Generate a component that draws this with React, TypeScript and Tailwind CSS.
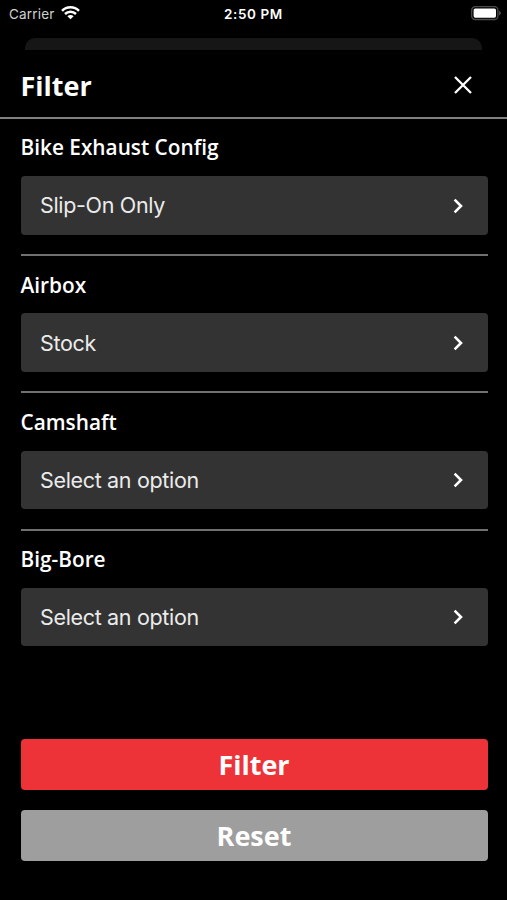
import React, { useState } from 'react'

interface FilterOption {
  label: string
  value: string | null
}

const initialOptions: FilterOption[] = [
  { label: 'Bike Exhaust Config', value: 'Slip-On Only' },
  { label: 'Airbox', value: 'Stock' },
  { label: 'Camshaft', value: null },
  { label: 'Big-Bore', value: null },
]

function StatusBar() {
  return (
    <div className="grid h-[38px] grid-cols-3 items-start px-[6.5px] pt-1 font-['Inter',sans-serif] text-[13.5px] leading-5">
      <div className="flex items-center gap-[6px] pl-[2.5px] text-[#d0d0d0]">
        <span className="tracking-[0.2px]">Carrier</span>
        <svg width="19" height="15" viewBox="0 0 19 15" fill="none" stroke="#fff" strokeWidth="2.5" className="-mt-[3px]">
          <path d="M1 5.8a12.1 12.1 0 0 1 17 0" />
          <path d="M4 9a7.8 7.8 0 0 1 11 0" />
          <path d="M9.5 14.3 6.4 11.3a4.4 4.4 0 0 1 6.2 0Z" fill="#fff" stroke="none" />
        </svg>
      </div>
      <span className="text-center font-semibold tracking-[0.6px] text-white">2:50 PM</span>
      <svg width="30" height="15" viewBox="0 0 30 15" className="mt-[2px] justify-self-end">
        <rect x="0.7" y="0.7" width="26.2" height="12.8" rx="3.6" fill="none" stroke="#4c4c4c" strokeWidth="1.3" />
        <rect x="2.6" y="2.5" width="22.4" height="9.2" rx="1.6" fill="#fff" />
        <path d="M28.2 4.8c2 .8 2 3.8 0 4.6Z" fill="#5c5c5c" />
      </svg>
    </div>
  )
}

function OptionField({ label, value }: FilterOption) {
  return (
    <section className="h-[137.2px] border-b-2 border-[#707070] pt-[14.4px] last:border-b-0">
      <h2 className="text-[20.8px] font-semibold leading-7 text-white">{label}</h2>
      <button className="mt-[14.9px] flex h-[58.5px] w-full items-center justify-between rounded-[4px] bg-[#333] pl-[19.5px] pr-6 font-['Inter',sans-serif] text-[21.5px] text-[#ebebeb]">
        <span className="tracking-[-0.33px]">{value ?? 'Select an option'}</span>
        <svg width="12" height="16" viewBox="0 0 12 16" fill="none" stroke="#fff" strokeWidth="2.6">
          <path d="m2.6 1.6 6.4 6.4-6.4 6.4" />
        </svg>
      </button>
    </section>
  )
}

export default function App() {
  const [options, setOptions] = useState(initialOptions)

  const handleReset = () => setOptions(options.map((o) => ({ ...o, value: null })))

  return (
    <div className="flex h-[900px] w-[507px] flex-col overflow-hidden bg-black font-['Open_Sans',sans-serif]">
      <StatusBar />

      {/* edge of the screen behind the sheet */}
      <div className="mx-[25px] h-3 rounded-t-[10px] bg-[#161616]" />

      <header className="flex h-[69px] items-center justify-between border-b-2 border-[#808080] pl-[20.5px] pr-[35px] pt-[3px]">
        <h1 className="pt-[3px] text-[27px] font-bold text-white">Filter</h1>
        <button aria-label="Close">
          <svg width="18" height="18" viewBox="0 0 18 18" fill="none" stroke="#fff" strokeWidth="2.3">
            <path d="m1 1 16 16M17 1 1 17" />
          </svg>
        </button>
      </header>

      <main className="pl-[20.5px] pr-[19.5px]">
        {options.map((option) => (
          <OptionField key={option.label} {...option} />
        ))}
      </main>

      <footer className="mt-auto space-y-5 pl-[20.5px] pr-[19.5px] pb-[39px] text-[27px] font-bold text-white">
        <button className="block h-[51px] w-full rounded-[4px] bg-[#ed3338] leading-[51px]">Filter</button>
        <button onClick={handleReset} className="block h-[51px] w-full rounded-[4px] bg-[#9e9e9e] leading-[51px]">
          Reset
        </button>
      </footer>
    </div>
  )
}
